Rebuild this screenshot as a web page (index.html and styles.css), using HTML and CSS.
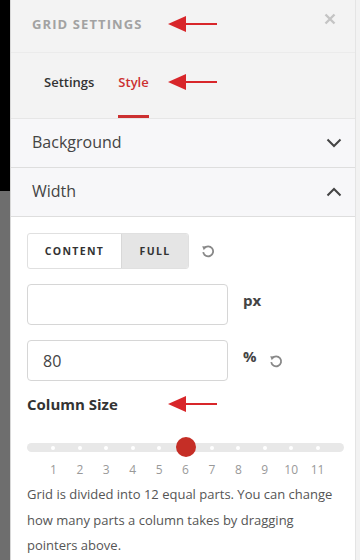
FILE: index.html
```html
<!DOCTYPE html>
<html lang="en">
<head>
  <meta charset="UTF-8">
  <meta name="viewport" content="width=device-width, initial-scale=1.0">
  <title>Grid Settings</title>
  <link rel="stylesheet" href="styles.css">
</head>
<body>

<div class="backdrop"></div>

<div class="panel">
  <div class="header">
    <span class="title">GRID SETTINGS</span>
    <svg class="close" width="12" height="12" viewBox="0 0 12 12"><path d="M1.5 1.5 L10.5 10.5 M10.5 1.5 L1.5 10.5" stroke="#c4c4c4" stroke-width="2.4"/></svg>
  </div>

  <div class="tabs">
    <span class="tab">Settings</span>
    <span class="tab active">Style</span>
  </div>

  <div class="group">
    <span>Background</span>
    <svg class="chevron" width="16" height="10" viewBox="0 0 16 10"><path d="M1.5 1.5 L8 8 L14.5 1.5" fill="none" stroke="#444" stroke-width="2"/></svg>
  </div>
  <div class="group">
    <span>Width</span>
    <svg class="chevron" width="16" height="10" viewBox="0 0 16 10"><path d="M1.5 8.5 L8 2 L14.5 8.5" fill="none" stroke="#444" stroke-width="2"/></svg>
  </div>

  <div class="content">
    <div class="row">
      <div class="segmented">
        <span class="seg">CONTENT</span>
        <span class="seg on">FULL</span>
      </div>
      <svg class="reset" width="14" height="14" viewBox="0 0 14 14"><path d="M3.2 4.2 A5 5 0 1 1 2.2 8.2" fill="none" stroke="#888" stroke-width="1.8"/><path d="M1.2 2.2 L5.4 2.4 L2.8 6.2 Z" fill="#888"/></svg>
    </div>

    <div class="row">
      <input class="field" type="text" value="">
      <span class="unit">px</span>
    </div>

    <div class="row">
      <input class="field" type="text" value="80">
      <span class="unit">%</span>
      <svg class="reset" width="14" height="14" viewBox="0 0 14 14"><path d="M3.2 4.2 A5 5 0 1 1 2.2 8.2" fill="none" stroke="#888" stroke-width="1.8"/><path d="M1.2 2.2 L5.4 2.4 L2.8 6.2 Z" fill="#888"/></svg>
    </div>

    <h3 class="label">Column Size</h3>

    <div class="slider">
      <div class="track">
        <span class="dot"></span><span class="dot"></span><span class="dot"></span>
        <span class="dot"></span><span class="dot"></span><span class="dot"></span>
        <span class="dot"></span><span class="dot"></span><span class="dot"></span>
        <span class="dot"></span><span class="dot"></span>
        <span class="handle"></span>
      </div>
      <div class="ticks">
        <span>1</span><span>2</span><span>3</span><span>4</span><span>5</span><span>6</span>
        <span>7</span><span>8</span><span>9</span><span>10</span><span>11</span>
      </div>
    </div>

    <p class="hint">Grid is divided into 12 equal parts. You can change how many parts a column takes by dragging pointers above.</p>
  </div>
</div>

<!-- annotation arrows -->
<svg class="arrow a1" width="50" height="18" viewBox="0 0 50 18"><path d="M0 9 L18 1 L18 17 Z" fill="#d8262a"/><path d="M16 9 H49" stroke="#d8262a" stroke-width="2"/></svg>
<svg class="arrow a2" width="50" height="18" viewBox="0 0 50 18"><path d="M0 9 L18 1 L18 17 Z" fill="#d8262a"/><path d="M16 9 H49" stroke="#d8262a" stroke-width="2"/></svg>
<svg class="arrow a3" width="50" height="18" viewBox="0 0 50 18"><path d="M0 9 L18 1 L18 17 Z" fill="#d8262a"/><path d="M16 9 H49" stroke="#d8262a" stroke-width="2"/></svg>

</body>
</html>
```

FILE: styles.css
```css
body {
  margin: 0;
  display: flex;
  height: 560px;
  overflow: hidden;
  background: #f2f2f2;
  font-family: 'Open Sans', 'Noto Sans', sans-serif;
  color: #333;
}
.backdrop {
  width: 10px;
  flex: none;
  background: linear-gradient(#000 0, #000 191px, #6e6e6e 191px);
}
.panel {
  width: 344px;
  flex: none;
  background: #fff;
  border-left: 1px solid #d8d8d8;
  border-right: 1px solid #e4e4e4;
}
.header {
  height: 52px;
  display: flex;
  align-items: center;
  justify-content: space-between;
  padding: 0 19px 0 21px;
  background: #f3f3f3;
  border-bottom: 1px solid #ebebeb;
}
.title {
  font-size: 13px;
  font-weight: 700;
  letter-spacing: 1.1px;
  color: #a2a2a2;
  margin-top: -4px;
}
.close {
  margin-top: -14px;
}
.tabs {
  height: 65px;
  display: flex;
  gap: 24px;
  padding-left: 33px;
  background: #f3f3f3;
  border-bottom: 1px solid #e6e6e6;
}
.tab {
  display: flex;
  align-items: center;
  font-size: 13px;
  font-weight: 600;
  color: #333;
  border-bottom: 3px solid transparent;
  padding-bottom: 4px;
}
.tab.active {
  color: #cc3030;
  border-bottom-color: #cc3030;
}
.group {
  height: 48px;
  display: flex;
  align-items: center;
  justify-content: space-between;
  padding: 0 13px 0 21px;
  background: #f7f7f9;
  border-bottom: 1px solid #dedede;
  font-size: 16px;
  color: #444;
}
.group span {
  margin-top: -3px;
}
.content {
  padding: 16px 11px 0 16px;
}
.row {
  display: flex;
  align-items: center;
  margin-bottom: 15px;
}
.segmented {
  display: flex;
  height: 34px;
  border: 1px solid #e0e0e0;
  border-radius: 3px;
  overflow: hidden;
}
.seg {
  display: flex;
  align-items: center;
  justify-content: center;
  font-size: 10.5px;
  font-weight: 700;
  letter-spacing: 1.3px;
  color: #333;
}
.seg:first-child {
  width: 93px;
}
.seg.on {
  width: 66px;
  background: #e5e5e5;
  border-left: 1px solid #d8d8d8;
}
.reset {
  margin-left: 12px;
}
.field {
  width: 201px;
  height: 41px;
  box-sizing: border-box;
  border: 1px solid #d6d6d6;
  border-radius: 4px;
  padding: 0 15px;
  font-family: inherit;
  font-size: 16px;
  color: #444;
}
.unit {
  margin-left: 15px;
  margin-top: -10px;
  font-size: 15px;
  font-weight: 700;
  color: #444;
}
.label {
  margin: -2px 0 0;
  font-size: 15px;
  font-weight: 700;
  color: #333;
}
.slider {
  margin-top: 29px;
}
.track {
  position: relative;
  height: 9px;
  border-radius: 5px;
  background: #e8e8e8;
  display: flex;
  justify-content: space-between;
  align-items: center;
  padding: 0 24.4px;
}
.dot {
  width: 4px;
  height: 4px;
  border-radius: 50%;
  background: #fff;
}
.handle {
  position: absolute;
  left: 148.5px;
  top: -6px;
  width: 20px;
  height: 20px;
  border-radius: 50%;
  background: #c52e26;
}
.ticks {
  display: flex;
  justify-content: space-between;
  padding: 0 24.4px;
  margin-top: 9px;
  font-size: 12px;
  color: #999;
}
.ticks span {
  width: 4px;
  display: flex;
  justify-content: center;
}
.hint {
  margin: 4px 0 0;
  font-size: 13px;
  line-height: 25.5px;
  color: #555;
}
.arrow {
  position: absolute;
  left: 168px;
}
.a1 { top: 15px; }
.a2 { top: 73px; }
.a3 { top: 395px; }
```
